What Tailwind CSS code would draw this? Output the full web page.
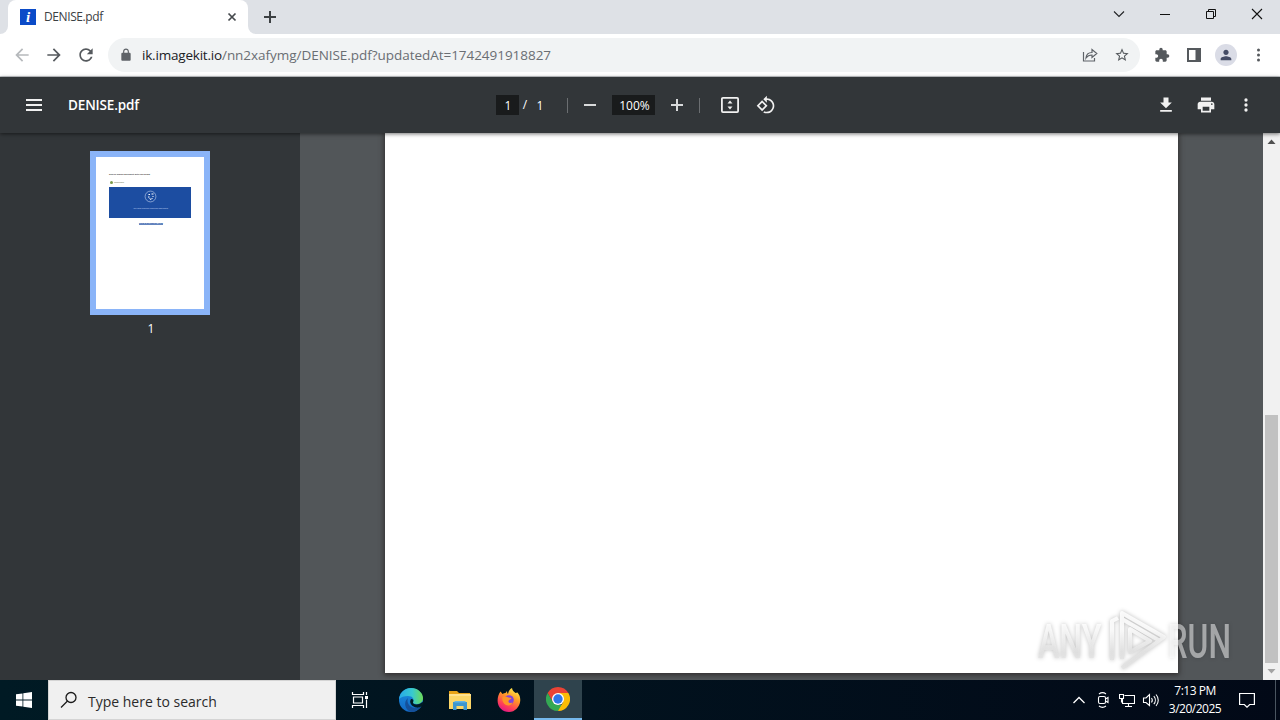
<!DOCTYPE html>
<html lang="en">
<head>
  <meta charset="UTF-8" />
  <meta name="viewport" content="width=device-width, initial-scale=1.0" />
  <title>DENISE.pdf</title>
  <script src="https://cdn.jsdelivr.net/npm/@tailwindcss/browser@4"></script>
</head>
<body class="relative w-[1280px] h-[720px] overflow-hidden flex flex-col bg-[#525659] font-['Open_Sans','Noto_Sans',sans-serif]">

  <!-- Tab strip -->
  <header class="h-[34px] shrink-0 bg-[#dee1e6] flex items-end">
    <div class="size-2 bg-white"><div class="size-2 bg-[#dee1e6] rounded-br-lg"></div></div>
    <div class="w-60 h-[34px] bg-white rounded-t-lg flex items-center pl-3 pr-2">
      <svg class="size-4" viewBox="0 0 16 16">
        <rect width="16" height="16" fill="#0b4bc8" />
        <text x="8" y="13" text-anchor="middle" font-family="Liberation Serif, serif" font-size="15" font-weight="bold" font-style="italic" fill="#fff">i</text>
      </svg>
      <span class="ml-2 text-[12px] tracking-[-0.4px] text-[#3c4043]">DENISE.pdf</span>
      <svg class="ml-auto size-4" viewBox="0 0 16 16" stroke="#45494d" stroke-width="1.7"><path d="M4.5 4.5l7 7M11.5 4.5l-7 7" /></svg>
    </div>
    <div class="size-2 bg-white"><div class="size-2 bg-[#dee1e6] rounded-bl-lg"></div></div>
    <svg class="ml-1 mb-[7px] size-5" viewBox="0 0 20 20" stroke="#3c4043" stroke-width="2"><path d="M10 4v12M4 10h12" /></svg>
    <div class="ml-auto h-[34px] flex items-center pb-[6px]">
      <svg class="w-[46px] h-4" viewBox="0 0 46 16" fill="none" stroke="#202124" stroke-width="1.1"><path d="M18 5.5l5 5 5-5" /></svg>
      <svg class="w-[46px] h-4" viewBox="0 0 46 16" fill="none" stroke="#111"><path d="M18 8.500h10" /></svg>
      <svg class="w-[46px] h-4" viewBox="0 0 46 16" fill="none" stroke="#111"><path d="M18.500 5.500h7v7h-7zM20.500 5.500v-2h7v7h-2" /></svg>
      <svg class="w-[46px] h-4" viewBox="0 0 46 16" fill="none" stroke="#111" stroke-width="1.1"><path d="M18 3l10 10M28 3L18 13" /></svg>
    </div>
  </header>

  <!-- Address bar -->
  <nav class="h-[43px] shrink-0 bg-white border-b border-[#c9cccf] flex items-center px-1.5">
    <div class="w-8 flex justify-center"><svg class="size-5" viewBox="0 0 24 24" fill="#b6b9bc"><path d="M20 11H7.830l5.590-5.590L12 4l-8 8 8 8 1.410-1.410L7.830 13H20z" /></svg></div>
    <div class="w-8 flex justify-center"><svg class="size-5" viewBox="0 0 24 24" fill="#55595d"><path d="M4 11h12.170l-5.590-5.590L12 4l8 8-8 8-1.410-1.410L16.170 13H4z" /></svg></div>
    <div class="w-8 flex justify-center"><svg class="size-5" viewBox="0 0 24 24" fill="#55595d"><path d="M17.650 6.350C16.200 4.900 14.210 4 12 4c-4.420 0-7.990 3.580-7.990 8s3.570 8 7.990 8c3.730 0 6.840-2.550 7.730-6h-2.080c-.82 2.330-3.040 4-5.650 4-3.310 0-6-2.690-6-6s2.690-6 6-6c1.660 0 3.140.69 4.220 1.780L13 11h7V4l-2.350 2.350z" /></svg></div>
    <div class="ml-1.5 w-[1032px] h-[34px] rounded-full bg-[#f1f3f4] flex items-center pl-[11px] pr-0.5">
      <svg class="size-[14px]" viewBox="0 0 24 24" fill="#5f6368"><path d="M18 8h-1V6c0-2.760-2.240-5-5-5S7 3.240 7 6v2H6c-1.100 0-2 .9-2 2v10c0 1.100.9 2 2 2h12c1.100 0 2-.9 2-2V10c0-1.100-.9-2-2-2zM9 8V6a3 3 0 0 1 6 0v2z" /></svg>
      <span class="ml-[9px] text-[13.5px] text-[#6a6e73] whitespace-nowrap"><span class="text-[#202124] tracking-[-0.2px]">ik.imagekit.io</span><span class="tracking-[-0.04px]">/nn2xafymg/DENISE.pdf?updatedAt=1742491918827</span></span>
      <div class="ml-auto w-8 flex justify-center"><svg class="size-4" viewBox="0 0 16 16" fill="none" stroke="#5f6368" stroke-width="1.2"><path d="M1.500 5v9h11v-3M4 11c.3-4 2.500-5.500 6-5.500V2.500l4.800 4-4.800 4V8c-2.800 0-4.500.8-6 3z" /></svg></div>
      <div class="w-8 flex justify-center"><svg class="size-4" viewBox="0 0 24 24" fill="#55595d"><path d="M22 9.240l-7.190-.62L12 2 9.190 8.630 2 9.240l5.460 4.730L5.820 21 12 17.270 18.180 21l-1.630-7.030zM12 15.400l-3.760 2.270 1-4.280-3.320-2.880 4.380-.38L12 6.100l1.710 4.040 4.380.38-3.320 2.880 1 4.280z" /></svg></div>
    </div>
    <div class="ml-1.5 w-8 flex justify-center"><svg class="size-4" viewBox="0 0 24 24" fill="#55595d"><path d="M20.500 11H19V7c0-1.100-.9-2-2-2h-4V3.500a2.500 2.500 0 0 0-5 0V5H4c-1.100 0-1.990.9-1.990 2v3.800H3.500c1.490 0 2.700 1.210 2.700 2.700s-1.210 2.700-2.700 2.700H2V20c0 1.100.9 2 2 2h3.800v-1.500c0-1.490 1.210-2.700 2.700-2.700s2.700 1.210 2.700 2.700V22H17c1.100 0 2-.9 2-2v-4h1.500a2.500 2.500 0 0 0 0-5z" /></svg></div>
    <div class="w-8 flex justify-center"><svg class="size-4" viewBox="0 0 16 16"><path fill="#55595d" fill-rule="evenodd" d="M1 1h14v14H1zM3 3v10h6.500V3z" /></svg></div>
    <div class="w-8 flex justify-center">
      <div class="size-[22px] rounded-full bg-[#dadce6] flex items-center justify-center"><svg class="size-4" viewBox="0 0 24 24" fill="#454c66"><path d="M12 12c2.210 0 4-1.790 4-4s-1.790-4-4-4-4 1.790-4 4 1.790 4 4 4zm0 2c-2.670 0-8 1.340-8 4v2h16v-2c0-2.660-5.330-4-8-4z" /></svg></div>
    </div>
    <div class="w-8 flex justify-center"><svg class="size-4" viewBox="0 0 16 16" fill="#55595d"><circle cx="8.500" cy="3" r="1.500" /><circle cx="8.500" cy="8" r="1.500" /><circle cx="8.500" cy="13" r="1.500" /></svg></div>
  </nav>

  <!-- PDF toolbar -->
  <div class="relative z-10 h-14 shrink-0 bg-[#323639] text-white flex items-center shadow-[0_1px_4px_rgba(0,0,0,0.55)]">
    <svg class="ml-[26px] size-4" viewBox="0 0 16 16" fill="#f1f1f1"><path d="M0 2h16v2H0zM0 7h16v2H0zM0 12h16v2H0z" /></svg>
    <div class="ml-[26px] w-[428px] text-[13.5px] font-semibold tracking-[-0.15px]">DENISE.pdf</div>
    <div class="w-[23px] h-5 bg-[#191b1c] text-[12px] leading-[21px] text-center pl-px">1</div>
    <div class="w-3 text-[12px] text-center">/</div>
    <div class="w-[18px] text-[12px] text-center pt-px">1</div>
    <div class="ml-[18px] w-px h-[15px] bg-[#6b6e71]"></div>
    <svg class="ml-[14px] size-4" viewBox="0 0 16 16" fill="#d8dadb"><path d="M2 7h12v2H2z" /></svg>
    <div class="ml-[14px] w-[43px] h-5 bg-[#191b1c] text-[12px] leading-[21px] text-center pl-0.5">100%</div>
    <svg class="ml-[14px] size-4" viewBox="0 0 16 16" fill="#d8dadb"><path d="M2 7h5V2h2v5h5v2H9v5H7V9H2z" /></svg>
    <div class="ml-[14px] w-px h-[15px] bg-[#6b6e71]"></div>
    <svg class="ml-5 size-5" viewBox="0 0 20 20"><rect x="1.900" y="2.900" width="16.200" height="14.200" rx="1" fill="none" stroke="#f1f1f1" stroke-width="1.800" /><path fill="#f1f1f1" d="M10 5.500L12.500 8.500h-5zM10 14.500L7.500 11.500h5z" /></svg>
    <svg class="ml-4 size-5" viewBox="0 0 24 24" fill="#f1f1f1"><path d="M7.340 6.410L.86 12.900l6.490 6.480 6.490-6.480zM3.690 12.900l3.660-3.660L11 12.900l-3.660 3.660zM19.360 6.640C17.610 4.880 15.300 4 13 4V.76L8.760 5 13 9.240V6c1.790 0 3.580.68 4.950 2.050 2.730 2.730 2.730 7.170 0 9.900C16.580 19.320 14.790 20 13 20c-.97 0-1.940-.21-2.840-.61l-1.490 1.490C10.020 21.620 11.510 22 13 22c2.300 0 4.610-.88 6.360-2.640 3.520-3.510 3.520-9.210 0-12.720z" /></svg>
    <div class="ml-auto mr-[14px] flex">
      <div class="w-10 flex justify-center"><svg class="size-5" viewBox="0 0 24 24" fill="#f1f1f1"><path d="M19 9h-4V3H9v6H5l7 7zM5 18v2h14v-2z" /></svg></div>
      <div class="w-10 flex justify-center"><svg class="size-5" viewBox="0 0 24 24" fill="#f1f1f1"><path d="M19 8H5c-1.660 0-3 1.340-3 3v6h4v4h12v-4h4v-6c0-1.660-1.340-3-3-3zm-3 11H8v-5h8v5zm3-7c-.55 0-1-.45-1-1s.45-1 1-1 1 .45 1 1-.45 1-1 1zm-1-9H6v4h12V3z" /></svg></div>
      <div class="w-10 flex justify-center"><svg class="size-5" viewBox="0 0 24 24" fill="#f1f1f1"><circle cx="12" cy="6" r="2" /><circle cx="12" cy="12" r="2" /><circle cx="12" cy="18" r="2" /></svg></div>
    </div>
  </div>

  <!-- Viewer -->
  <main class="h-[547px] shrink-0 flex">
    <aside class="w-[300px] bg-[#323639] flex flex-col items-center pt-[18px]">
      <div class="w-[120px] h-[164px] border-6 border-[#8ab4f8] bg-white">
        <svg class="w-[108px] h-[152px] font-['Open_Sans',sans-serif]" viewBox="0 0 108 152">
          <text x="13" y="17.900" font-size="2.200" font-weight="bold" fill="#444" textLength="41" lengthAdjust="spacingAndGlyphs">DENISE shared document with you below</text>
          <circle cx="15.500" cy="25.500" r="1.500" fill="#7b9a4a" />
          <text x="18" y="26.300" font-size="2.300" fill="#777a55" textLength="10">Sharepoint</text>
          <rect x="13" y="30" width="82" height="31" fill="#1c4da1" />
          <circle cx="54.500" cy="39.500" r="5.400" fill="none" stroke="#c6d4ee" stroke-width=".6" />
          <path d="M52.500 37.500h1.500M55.500 37h2M52 40h1.500M53.500 41.500l1.500 1 1.500-1.500M56.500 39.500h1" stroke="#fff" fill="none" />
          <text x="37" y="52" font-size="2.300" fill="#b4c7ea" textLength="35">You have received a secured document</text>
          <text x="43" y="66.600" font-size="2" font-weight="bold" fill="#1c4da1" textLength="24" lengthAdjust="spacingAndGlyphs">VIEW DOCUMENT HERE</text>
          <path d="M43 67.200h24" stroke="#1c4da1" stroke-width="1" />
        </svg>
      </div>
      <div class="mt-1 pl-0.5 text-[12px] leading-5 text-white">1</div>
    </aside>
    <section class="flex-1 bg-[#525659] pl-[85px]">
      <div class="w-[793px] h-[540px] bg-white shadow-[0_1px_5px_1px_rgba(40,36,36,0.8)]"></div>
    </section>
    <div class="w-[17px] bg-[#f1f1f1] flex flex-col items-center">
      <svg class="size-[17px]" viewBox="0 0 17 17"><path fill="#505050" d="M4.500 11h8l-4-4.500z" /></svg>
      <div class="mt-auto w-[13px] h-[248px] bg-[#c1c1c1]"></div>
      <svg class="size-[17px]" viewBox="0 0 17 17"><path fill="#a3a3a3" d="M4.500 6h8l-4 4.500z" /></svg>
    </div>
  </main>

  <!-- Taskbar -->
  <footer class="h-10 shrink-0 bg-gradient-to-r from-[#001a24] to-[#020917] flex items-center">
    <div class="w-12 flex justify-center"><svg class="size-4" viewBox="0 0 16 16" fill="#fff"><path d="M0 2.300l6.500-.9v6.200H0zM7.300 1.300L16 0v7.600H7.300zM0 8.400h6.500v6.200L0 13.700zM7.300 8.400H16V16l-8.700-1.300z" /></svg></div>
    <div class="w-72 h-10 bg-[#f0f0f0] border border-[#d4d4d4] flex items-center pl-[11px]">
      <svg class="size-[18px]" viewBox="0 0 18 18" fill="none" stroke="#1a1a1a" stroke-width="1.300"><circle cx="11" cy="6.500" r="5" /><path d="M7.500 10L1 16.500" /></svg>
      <span class="ml-[10px] pt-0.5 text-[14px] text-[#2b2b2b]">Type here to search</span>
    </div>
    <div class="w-12 flex justify-center"><svg class="size-[18px]" viewBox="0 0 18 18" fill="none" stroke="#fff" stroke-width="1.200"><path d="M1.500 1v2.500h11V1M1.500 17v-2.500h11V17M2.500 6h9v6h-9zM15.500 1v3M15.500 8.500V17" /><path fill="#fff" stroke="none" d="M14 5h3v3h-3z" /></svg></div>
    <div class="ml-[3px] w-12 flex justify-center">
      <svg class="size-6" viewBox="0 0 24 24">
        <defs>
          <linearGradient id="edgeTop" x1="0" y1="0" x2="1" y2="0"><stop offset="0" stop-color="#27a9e8" /><stop offset=".55" stop-color="#38c9d0" /><stop offset="1" stop-color="#6edc55" /></linearGradient>
          <linearGradient id="edgeLow" x1="0" y1="0" x2="0" y2="1"><stop offset="0" stop-color="#1b8fe0" /><stop offset="1" stop-color="#1268c4" /></linearGradient>
        </defs>
        <circle cx="12" cy="12" r="12" fill="url(#edgeLow)" />
        <path fill="url(#edgeTop)" d="M0 11C1 4 6 0 12 0c7 0 12 5 12 10 0 4-3 6-6.500 6-3 0-4-1-3.500-2 1.500-3-.5-6-5-6-4 0-7 1-9 3z" />
        <path fill="#15509a" d="M9 10c-2 5 2 10 8 10 2 0 3.500-.5 5-1.500C20 22 16 24 12 24 6 22 4 14 9 10z" />
        <path fill="#001a24" d="M12 11c1.800-.3 3 1.200 2.200 2.800-.8 1.600.8 2.700 3.300 2.700 2 0 3.500-.6 4.800-1.700l1.700-.8v3l-1.800 1.500c-2 1.200-3.500 1.300-5.200 1-4-.8-7.500-4.800-5-8.500z" />
      </svg>
    </div>
    <div class="w-[49px] flex justify-center">
      <svg class="w-[22px] h-[19px]" viewBox="0 0 22 19"><path fill="#e8a317" d="M0 0h8l2 2h11v5H0z" /><path fill="#fcd667" d="M0 3h22v15H0z" /><path fill="#ffe28f" d="M0 3h22v2H0z" /><path fill="#3d96cf" d="M4 11h14v8h-3.500v-4h-7v4H4z" /><path fill="#63b5e5" d="M5.500 10h11v1.500h-11z" /></svg>
    </div>
    <div class="w-[49px] flex justify-center">
      <svg class="size-6" viewBox="0 0 24 24">
        <defs><linearGradient id="fox" x1=".8" y1="0" x2=".3" y2="1"><stop offset="0" stop-color="#fff34f" /><stop offset=".4" stop-color="#ff9a26" /><stop offset=".75" stop-color="#ff4057" /><stop offset="1" stop-color="#e31587" /></linearGradient></defs>
        <path fill="url(#fox)" d="M3.500 3.500l2 2.500c1-.8 2-1 3-1L10 3c.2 1.500 0 2 1 3 .5-2.500 1.500-4.800 4-6 .3 2.500 2 3.500 3.500 5l2-.5c2.200 2.500 3 5 2.700 8.500-.5 6-5.200 11-11.200 11C5.500 24 .5 19 .6 12.500.7 9 1.500 6 3.500 3.500z" />
        <circle cx="12" cy="12" r="4.800" fill="#8143dc" />
        <path fill="#ff9427" d="M5.500 9c2-1.500 4-.8 6 .5l3 .5c-.5 1.500-2.500 1.500-3 3-.5 2 2.500 2.500 4 1.500-1 3.500-6 4-8.500 1-1.500-2-2-4-1.500-6.500z" />
      </svg>
    </div>
    <div class="ml-px w-12 h-10 bg-[#2f434d] border-b-2 border-[#76b9ed] flex items-center justify-center">
      <svg class="size-6" viewBox="0 0 24 24"><path fill="#ea4335" d="M12 0a12 12 0 0 1 10.400 6H12L6.800 15 1.600 6A12 12 0 0 1 12 0z" /><path fill="#34a853" d="M1.600 6l5.200 9L12 18h5.200L12 24A12 12 0 0 1 1.600 6z" /><path fill="#fbbc05" d="M12 6h10.400A12 12 0 0 1 12 24l5.200-9z" /><circle cx="12" cy="12" r="6" fill="#fff" /><circle cx="12" cy="12" r="4.700" fill="#2f76e8" /></svg>
    </div>
    <div class="ml-auto flex items-center h-10">
      <div class="w-6 flex justify-center"><svg class="w-3 h-4" viewBox="0 0 12 16" fill="none" stroke="#fff" stroke-width="1.300"><path d="M.5 11L6 5.500l5.500 5.500" /></svg></div>
      <div class="w-6 flex justify-center"><svg class="size-4" viewBox="0 0 16 16" fill="none" stroke="#fff" stroke-width="1.100"><rect x="3.500" y="4.500" width="7" height="7" rx="1.500" /><path d="M10.500 7l2.500-1.500v5L10.500 9M4 2c2-1.500 5-1.500 7 0M4 14c2 1.500 5 1.500 7 0" /></svg></div>
      <div class="w-6 flex justify-center"><svg class="size-4" viewBox="0 0 16 16" fill="none" stroke="#fff" stroke-width="1.100"><path d="M5.500 3.500h10v8H3.500V7M9.500 11.500v3M6 14.500h7M.5 2.500h4v4h-4zM2.500 6.500v4" /></svg></div>
      <div class="w-6 flex justify-center"><svg class="w-[18px] h-4" viewBox="0 0 18 16" fill="none" stroke="#fff" stroke-width="1.100"><path d="M1.500 6v4.500H4L7.500 13.500v-11L4 6zM9.500 6c1 1.300 1 3 0 4.500M11.800 4.200c2 2.300 2 5.700 0 8M14 2.500c3 3.300 3 8 0 11.500" /></svg></div>
      <div class="w-16 text-center text-[12px] leading-[18px] tracking-[-0.5px] text-white whitespace-nowrap">7:13 PM<br />3/20/2025</div>
      <div class="w-10 flex justify-center"><svg class="w-4 h-4" viewBox="0 0 16 16" fill="none" stroke="#fff" stroke-width="1.200"><path d="M.6 1.500h14.800v11h-4.700L8 15.200l-2.700-2.700H.6z" /></svg></div>
      <div class="ml-2 mr-1 w-px h-10 bg-[#4a5560]"></div>
    </div>
  </footer>

  <!-- Watermark -->
  <svg class="absolute z-20 left-[1030px] top-[602px] w-[210px] h-[76px] overflow-visible font-['Roboto',sans-serif] drop-shadow-[0_0_2px_rgba(0,0,0,0.3)]" viewBox="0 0 210 76">
    <defs>
      <linearGradient id="mark" x1="0" y1="0" x2="0" y2="1"><stop offset=".3" stop-color="#fff" /><stop offset=".7" stop-color="#e2e2e2" /></linearGradient>
    </defs>
    <g transform="translate(8 56) scale(.72 1)" font-size="49" font-weight="500">
      <text x="0" y="0" fill="url(#mark)" fill-opacity=".8" textLength="88" lengthAdjust="spacingAndGlyphs">ANY</text>
      <text x="180" y="0" fill="#fff" fill-opacity=".5" textLength="88" lengthAdjust="spacingAndGlyphs">RUN</text>
    </g>
    <path d="M82 58V19l6-3M92 57V11l42 24-42 31M92 17l38 22M100 50V27l20 12z" fill="none" stroke="url(#mark)" stroke-opacity=".85" stroke-width="4" stroke-linejoin="round" />
  </svg>

</body>
</html>
